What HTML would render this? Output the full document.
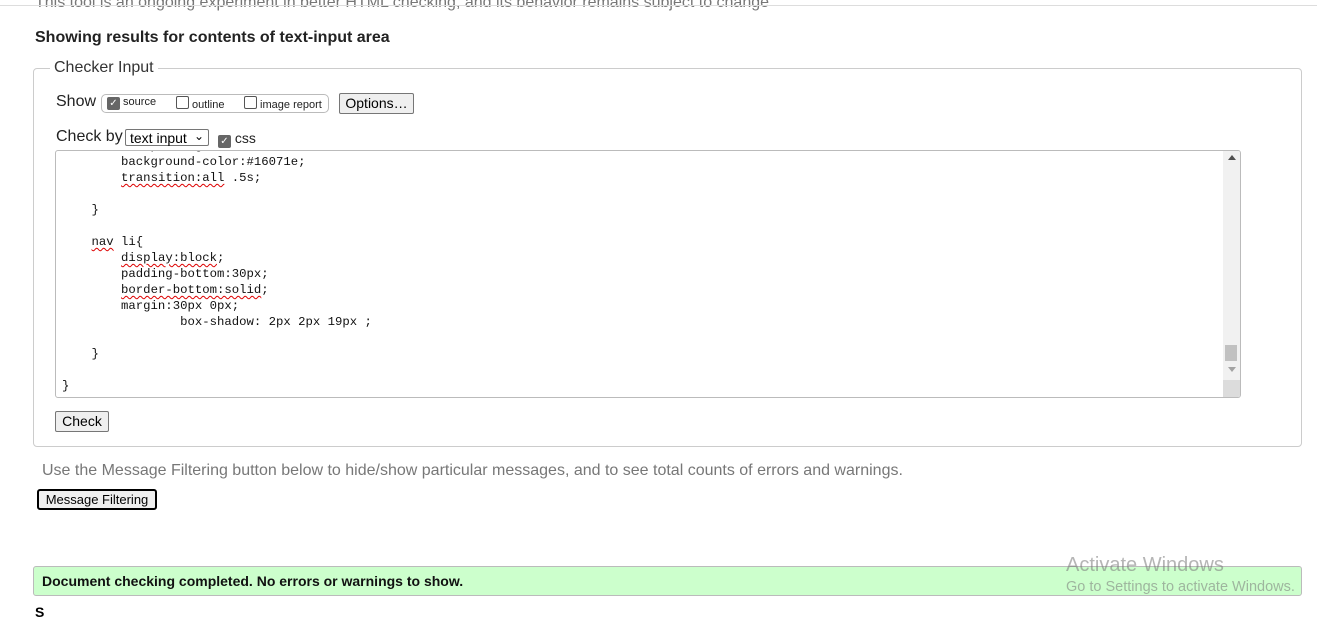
<!DOCTYPE html>
<html><head><meta charset="utf-8"><style>
body{margin:0;width:1317px;height:613px;overflow:hidden;background:#fff;font-family:"Liberation Sans",Arial,sans-serif;position:relative}
.a{position:absolute;white-space:pre}
.code{font-family:"Liberation Mono",monospace;font-size:12.3px;color:#111;line-height:16px}
.u{text-decoration:underline wavy #d00;text-decoration-thickness:1px;text-underline-offset:2px}
.cb{display:inline-block;width:11px;height:11px;border:1px solid #555;border-radius:2px;vertical-align:-1px;background:#fff}
.cb.on{background:#666;border-color:#666;color:#fff;font-size:10px;line-height:11px;text-align:center}
.btn{position:absolute;background:#efefef;border:1px solid #767676;border-radius:2px;font-size:14px;text-align:center;color:#000}
</style></head><body>
<div class="a" style="left:35px;top:-6px;font-size:16px;color:#777">This tool is an ongoing experiment in better HTML checking, and its behavior remains subject to change</div>
<div class="a" style="left:0;top:5px;width:1317px;height:1px;background:#ddd"></div>
<div class="a" style="left:35px;top:29px;font-size:16px;font-weight:bold;color:#222">Showing results for contents of text-input area</div>
<div class="a" style="left:33px;top:68px;width:1267px;height:377px;border:1px solid #ccc;border-radius:4px"></div>
<div class="a" style="left:50px;top:59px;padding:0 4px;background:#fff;font-size:16px;color:#333">Checker Input</div>
<div class="a" style="left:56px;top:93px;font-size:16px;color:#222">Show</div>
<div class="a" style="left:101px;top:94px;width:226px;height:17px;border:1px solid #bbb;border-radius:5px"></div>
<div class="a" style="left:107px;top:96px;font-size:11px;color:#222"><span class="cb on">✓</span> source</div>
<div class="a" style="left:176px;top:96px;font-size:11px;color:#222"><span class="cb"></span> outline</div>
<div class="a" style="left:244px;top:96px;font-size:11px;color:#222"><span class="cb"></span> image report</div>
<div class="btn" style="left:339px;top:93px;width:73px;height:19px;line-height:19px">Options…</div>
<div class="a" style="left:56px;top:128px;font-size:16px;color:#222">Check by</div>
<div class="a" style="left:125px;top:129px;height:17px;border:1px solid #767676;border-radius:2px;font-size:14px;line-height:17px;padding-left:4px;box-sizing:border-box;width:84px">text input <span style="position:absolute;right:4px;top:-2px;font-size:12px">⌄</span></div>
<div class="a" style="left:218px;top:130px;font-size:14px;color:#222"><span class="cb on">✓</span> css</div>
<div class="a" style="left:55px;top:150px;width:1184px;height:246px;border:1px solid #bbb;border-radius:3px;overflow:hidden">
 <div class="a code" style="left:6px;top:-13px">            padding:...
        background-color:#16071e;
        <span class="u">transition:all</span> .5s;

    }

    <span class="u">nav</span> li{
        <span class="u">display:block</span>;
        padding-bottom:30px;
        <span class="u">border-bottom:solid</span>;
        margin:30px 0px;
                box-shadow: 2px 2px 19px ;

    }

}</div>
 <div class="a" style="right:0;top:0;width:17px;height:246px;background:#f1f1f1"></div>
 <div class="a" style="right:4px;top:4px;width:0;height:0;border-left:4px solid transparent;border-right:4px solid transparent;border-bottom:5px solid #505050"></div>
 <div class="a" style="right:3px;top:194px;width:12px;height:16px;background:#c1c1c1"></div>
 <div class="a" style="right:4px;top:216px;width:0;height:0;border-left:4px solid transparent;border-right:4px solid transparent;border-top:5px solid #a3a3a3"></div>
 <div class="a" style="right:0;top:229px;width:17px;height:17px;background:#dcdcdc"></div>
</div>
<div class="btn" style="left:55px;top:411px;width:52px;height:19px;line-height:19px">Check</div>
<div class="a" style="left:42px;top:462px;font-size:16px;color:#777">Use the Message Filtering button below to hide/show particular messages, and to see total counts of errors and warnings.</div>
<div class="a" style="left:37px;top:489px;width:116px;height:17px;border:2px solid #000;border-radius:3px;background:#efefef;font-size:13px;line-height:17px;text-align:center">Message Filtering</div>
<div class="a" style="left:33px;top:566px;width:1267px;height:28px;background:#ccffcc;border:1px solid #bbb;border-radius:3px"></div>
<div class="a" style="left:42px;top:573px;font-size:14px;font-weight:bold;color:#111">Document checking completed. No errors or warnings to show.</div>
<div class="a" style="left:35px;top:604px;font-size:14px;font-weight:bold">S</div>
<div class="a" style="left:1066px;top:554px;font-size:20px;color:rgba(120,120,120,.55)">Activate Windows</div>
<div class="a" style="left:1066px;top:579px;font-size:14.5px;color:rgba(120,120,120,.55)">Go to Settings to activate Windows.</div>
</body></html>
